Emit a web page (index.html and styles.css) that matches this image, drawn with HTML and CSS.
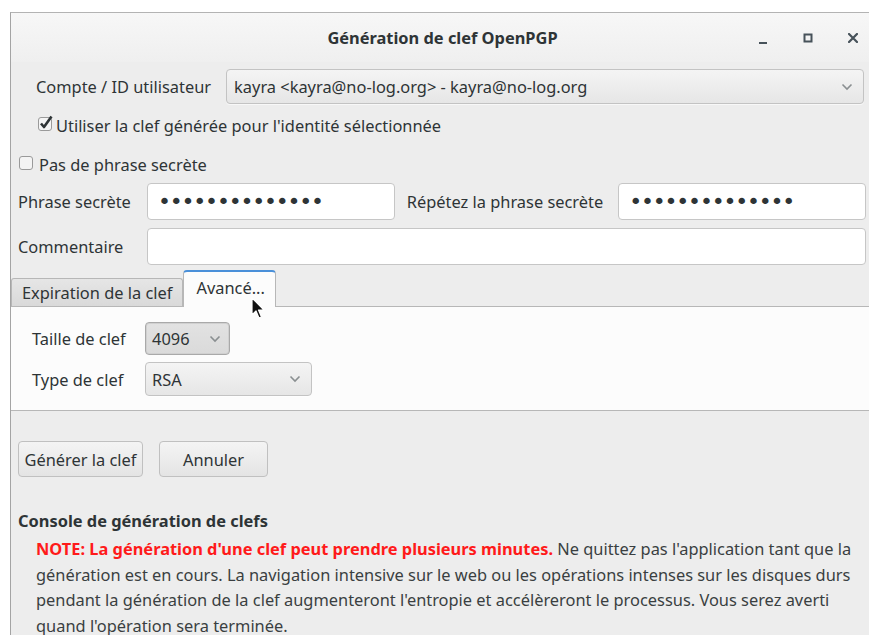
FILE: index.html
```html
<!DOCTYPE html>
<html lang="fr">
<head>
<meta charset="utf-8">
<title>Génération de clef OpenPGP</title>
<link rel="stylesheet" href="styles.css">
</head>
<body>
<div class="window">
  <header class="titlebar">
    <h1 class="title">Génération de clef OpenPGP</h1>
    <div class="wm-buttons">
      <span class="wm-btn" aria-label="Réduire">
        <svg width="10" height="10" viewBox="0 0 10 10"><rect x="1" y="7" width="8" height="2" fill="#47525a"/></svg>
      </span>
      <span class="wm-btn" aria-label="Agrandir">
        <svg width="10" height="10" viewBox="0 0 10 10"><rect x="1.5" y="1.5" width="7" height="7" fill="none" stroke="#47525a" stroke-width="2"/></svg>
      </span>
      <span class="wm-btn" aria-label="Fermer">
        <svg width="10" height="10" viewBox="0 0 10 10"><path d="M1 1 L9 9 M9 1 L1 9" stroke="#47525a" stroke-width="2.2" stroke-linecap="square"/></svg>
      </span>
    </div>
  </header>

  <main class="body">
    <section class="form">
      <div class="account-row">
        <label class="lbl">Compte / ID utilisateur</label>
        <div class="combo combo-wide">
          <span>kayra &lt;kayra@no-log.org&gt; - kayra@no-log.org</span>
          <svg class="chev" width="12" height="8" viewBox="0 0 12 8"><path d="M1.5 1.5 L6 6 L10.5 1.5" fill="none" stroke="#8a8f91" stroke-width="1.6"/></svg>
        </div>
      </div>

      <label class="check-row use-key">
        <span class="check checked">
          <svg width="18" height="18" viewBox="0 0 18 18">
            <rect x="0.5" y="3.5" width="13" height="13" rx="2.5" fill="#f4f4f4" stroke="#9a9a9a"/>
            <path d="M3 9.5 L6 13 L13.5 2.5" fill="none" stroke="#2e3436" stroke-width="2.6" stroke-linejoin="round"/>
          </svg>
        </span>
        <span class="lbl">Utiliser la clef générée pour l'identité sélectionnée</span>
      </label>

      <label class="check-row no-pass">
        <span class="check">
          <svg width="15" height="15" viewBox="0 0 15 15">
            <rect x="0.5" y="0.5" width="13" height="13" rx="2.5" fill="#f4f4f4" stroke="#9a9a9a"/>
          </svg>
        </span>
        <span class="lbl">Pas de phrase secrète</span>
      </label>

      <div class="pass-grid">
        <label class="lbl">Phrase secrète</label>
        <input class="entry" type="password" value="motdepasse1234">
        <label class="lbl lbl-repeat">Répétez la phrase secrète</label>
        <input class="entry" type="password" value="motdepasse1234">
        <label class="lbl">Commentaire</label>
        <input class="entry entry-span" type="text" value="">
      </div>
    </section>

    <section class="notebook">
      <div class="tabs">
        <div class="tab">Expiration de la clef</div>
        <div class="tab tab-active">Avancé...</div>
      </div>
      <div class="panel">
        <div class="panel-grid">
          <label class="lbl">Taille de clef</label>
          <div class="combo combo-size">
            <span>4096</span>
            <svg class="chev" width="12" height="8" viewBox="0 0 12 8"><path d="M1.5 1.5 L6 6 L10.5 1.5" fill="none" stroke="#8a8f91" stroke-width="1.6"/></svg>
          </div>
          <label class="lbl">Type de clef</label>
          <div class="combo combo-type">
            <span>RSA</span>
            <svg class="chev" width="12" height="8" viewBox="0 0 12 8"><path d="M1.5 1.5 L6 6 L10.5 1.5" fill="none" stroke="#8a8f91" stroke-width="1.6"/></svg>
          </div>
        </div>
      </div>
      <svg class="pointer" width="16" height="24" viewBox="0 0 16 24">
        <path d="M1 1 L1 18 L5 14 L8 21 L10.5 20 L7.5 13 L13 13 Z" fill="#111" stroke="#fff" stroke-width="1.2" stroke-linejoin="round"/>
      </svg>
    </section>

    <section class="actions">
      <button class="btn btn-generate">Générer la clef</button>
      <button class="btn btn-cancel">Annuler</button>
    </section>

    <section class="console">
      <h2 class="console-title">Console de génération de clefs</h2>
      <p class="console-text"><strong class="note">NOTE: La génération d'une clef peut prendre plusieurs minutes.</strong> Ne quittez pas l'application tant que la<br>génération est en cours. La navigation intensive sur le web ou les opérations intenses sur les disques durs<br>pendant la génération de la clef augmenteront l'entropie et accélèreront le processus. Vous serez averti<br>quand l'opération sera terminée.</p>
    </section>
  </main>
</div>
</body>
</html>
```

FILE: styles.css
```css
* { box-sizing: border-box; }

html, body {
  margin: 0;
  height: 100%;
  background: #ffffff;
  overflow: hidden;
}

body {
  font-family: "Noto Sans", "Open Sans", sans-serif;
  font-size: 16.4px;
  color: #2e3436;
}

.window {
  margin: 12px 0 0 10px;
  height: calc(100% - 12px);
  border-top: 1px solid #b3b3b3;
  border-left: 1px solid #a4a4a4;
  background: #ededed;
  position: relative;
}

/* ---- title bar ---- */
.titlebar {
  height: 49px;
  display: flex;
  align-items: center;
  justify-content: center;
  background: linear-gradient(#f7f7f7, #efefef);
  position: relative;
}

.title {
  margin: 0 0 0 5px;
  font-size: 16.4px;
  font-weight: bold;
  color: #2e3436;
}

.wm-buttons {
  position: absolute;
  right: 0;
  top: 0;
  height: 49px;
  display: flex;
  align-items: center;
  gap: 35px;
  padding-right: 11px;
}

.wm-btn {
  width: 10px;
  height: 10px;
  display: block;
}
.wm-btn svg { display: block; }
.wm-btn:first-child { margin-top: 4px; }

/* ---- form ---- */
.form {
  padding: 7px 3px 0 7px;
}

.lbl {
  white-space: nowrap;
  color: #2e3436;
}

.account-row {
  display: flex;
  align-items: center;
  gap: 15px;
  height: 35px;
  padding-left: 18px;
}

.combo {
  display: flex;
  align-items: center;
  justify-content: space-between;
  height: 35px;
  padding: 0 10px 0 7px;
  border: 1px solid #c3c3c3;
  border-radius: 4px;
  background: linear-gradient(#f4f4f4, #e6e6e6);
  box-shadow: 0 1px 0 rgba(255,255,255,0.6);
  color: #2e3436;
}

.combo-wide {
  flex: 1;
  margin-right: 2px;
}

.check-row {
  display: flex;
  align-items: center;
  height: 22px;
}

.use-key {
  margin-top: 10px;
  padding-left: 20px;
}
.use-key .check { width: 18px; height: 18px; margin-top: -4px; }

.no-pass {
  margin-top: 17px;
  padding-left: 1px;
}
.no-pass .check { width: 15px; height: 15px; margin-right: 5px; margin-top: -2px; }

.check svg { display: block; }

.pass-grid {
  margin-top: 8px;
  display: grid;
  grid-template-columns: 129px 1fr auto 1fr;
  grid-auto-rows: 37px;
  row-gap: 8px;
  align-items: center;
}

.lbl-repeat {
  padding: 0 15px 0 12px;
}

.entry {
  height: 37px;
  width: 100%;
  min-width: 0;
  border: 1px solid #c6c6c6;
  border-radius: 4px;
  background: #ffffff;
  padding: 0 8px 0 10px;
  font-family: "DejaVu Sans", sans-serif;
  font-size: 22px;
  letter-spacing: -1.2px;
  color: #2e3436;
  outline: none;
}

.entry-span {
  grid-column: 2 / 5;
}

/* ---- notebook ---- */
.notebook {
  margin-top: 5px;
  position: relative;
}

.tabs {
  display: flex;
  align-items: flex-end;
  height: 36px;
}

.tab {
  height: 28px;
  display: flex;
  align-items: center;
  padding: 0 10px 1px 10px;
  border: 1px solid #b7b7b7;
  border-bottom: none;
  border-radius: 3px 3px 0 0;
  background: linear-gradient(#e6e6e6, #d9d9d9);
  color: #2e3436;
  white-space: nowrap;
}

.tab-active {
  position: relative;
  z-index: 1;
  height: 37px;
  margin-bottom: -1px;
  padding: 0 10px 4px 12px;
  background: #fcfcfc;
  border-top: 2px solid #4a90d9;
  border-color: #4a90d9 #b7b7b7 #b7b7b7 #b7b7b7;
  border-radius: 4px 4px 0 0;
}

.panel {
  border-top: 1px solid #b7b7b7;
  border-bottom: 1px solid #b7b7b7;
  background: #fcfcfc;
  height: 105px;
  padding: 15px 0 0 21px;
}

.panel-grid {
  display: grid;
  grid-template-columns: 113px auto;
  grid-template-rows: 33px 34px;
  row-gap: 7px;
  align-items: center;
  justify-items: start;
}

.combo-size {
  width: 85px;
  height: 33px;
  padding: 0 8px 0 6px;
  border-color: #a9a9a9;
  background: linear-gradient(#e2e2e2, #dadada);
  box-shadow: inset 0 0 0 1px #d0d0d0;
}

.combo-type {
  width: 167px;
  height: 34px;
  padding: 0 10px 0 6px;
}

/* mouse pointer resting over the "Avancé..." tab */
.pointer {
  position: absolute;
  z-index: 2;
  left: 240px;
  top: 27px;
}

/* ---- buttons ---- */
.actions {
  margin-top: 30px;
  padding-left: 7px;
  display: flex;
  gap: 16px;
}

.btn {
  height: 36px;
  border: 1px solid #c0c0c0;
  border-radius: 4px;
  background: linear-gradient(#f4f4f4, #e4e4e4);
  font-family: inherit;
  font-size: 16.4px;
  color: #2e3436;
  padding: 0 3px;
}

.btn-generate { width: 125px; }
.btn-cancel { width: 109px; }

/* ---- console ---- */
.console {
  padding-left: 7px;
}

.console-title {
  margin: 34px 0 0 0;
  font-size: 16.4px;
  font-weight: bold;
  line-height: 20px;
  color: #2e3436;
}

.console-text {
  margin: 5px 0 0 0;
  padding-left: 18px;
  line-height: 25.5px;
  white-space: nowrap;
  color: #3a3f41;
}

.note {
  color: #ff1a1a;
  font-weight: bold;
}
```
